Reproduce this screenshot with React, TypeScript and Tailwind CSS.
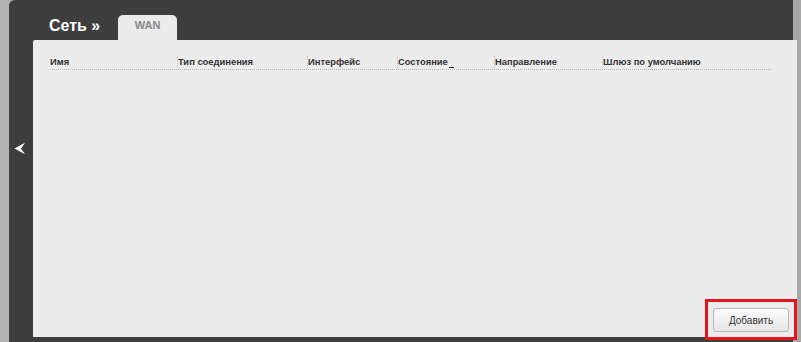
export default function App() {
  const columns = [
    { name: "Имя", width: "w-[127px]" },
    { name: "Тип соединения", width: "w-[130px]" },
    { name: "Интерфейс", width: "w-[90px]" },
    { name: "Состояние", width: "w-[97px]", cursor: true },
    { name: "Направление", width: "w-[108px]" },
    { name: "Шлюз по умолчанию", width: "flex-1" },
  ]

  return (
    <div className="flex w-[801px] h-[342px] bg-[#ababab] font-['Liberation_Sans',Arial,sans-serif] overflow-hidden">
      {/* left light strip */}
      <div className="w-[9px] shrink-0 bg-[#b3b3b3]" />

      {/* dark frame */}
      <div className="flex w-[784px] shrink-0 bg-[#3e3e3e] rounded-tl-[6px]">
        {/* back arrow gutter */}
        <div className="w-[24px] shrink-0 pt-[142px] pl-[5px]">
          <svg width="12" height="13" viewBox="0 0 12 13">
            <path d="M0.5 6.5 L11 0.8 L7 6.5 L11 12.2 Z" fill="#ffffff" />
          </svg>
        </div>

        <div className="relative z-10 flex flex-col w-[764px] shrink-0 pb-[5px]">
          {/* title + tab */}
          <div className="flex items-end h-[40px]">
            <div className="w-[85px] pl-[16px] pb-[6px] text-[16px] font-bold text-white leading-none">
              Сеть »
            </div>
            <div className="w-[59px] h-[25px] bg-[#ebebeb] rounded-t-[5px] flex justify-center pt-[5px] text-[11px] font-bold text-[#8a8a8a] leading-none">
              WAN
            </div>
          </div>

          {/* panel */}
          <div className="flex-1 flex flex-col bg-[#ececec] rounded-tl-[2px] pt-[16px] pl-[17px]">
            <div className="flex w-[721px] border-b border-dotted border-[#b5b5b5] pb-[1px] text-[9.4px] font-bold text-[#333] leading-[11px]">
              {columns.map((c, i) => (
                <div
                  key={c.name}
                  className={`${c.width} ${i > 0 ? "border-l border-dotted border-[#c4c4c4]" : ""}`}
                >
                  {c.name}
                  {c.cursor && <span className="inline-block w-[5px] h-[1px] bg-[#222] ml-[1px] align-[-3px]" />}
                </div>
              ))}
            </div>

            <div className="flex-1" />

            <div className="flex justify-end -mb-[3px]">
              <div className="border-[3px] border-[#e8141c] p-[5px]">
                <button className="w-[76px] h-[24px] rounded-[3px] border border-[#b9b9b9] bg-gradient-to-b from-[#fbfbfb] to-[#e6e6e6] text-[10px] text-[#333]">
                  Добавить
                </button>
              </div>
            </div>
          </div>
        </div>
      </div>

      {/* right strip */}
      <div className="flex-1 bg-[#a8a8a8]" />
    </div>
  )
}
